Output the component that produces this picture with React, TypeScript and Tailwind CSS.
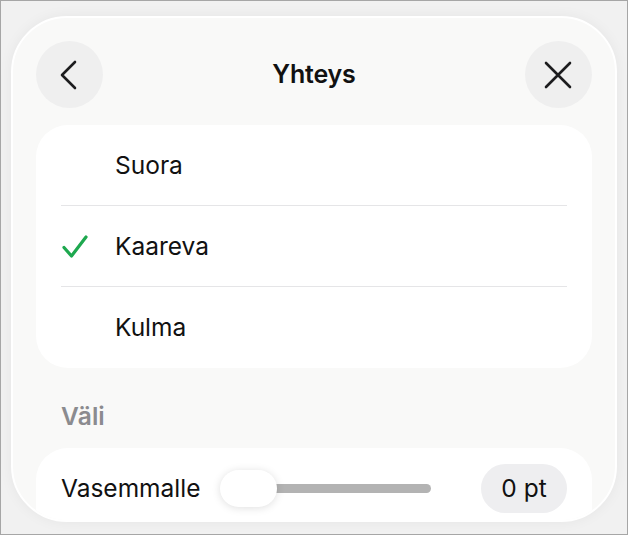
const options = [
  { label: 'Suora', checked: false },
  { label: 'Kaareva', checked: true },
  { label: 'Kulma', checked: false },
];

const App = () => {
  return (
    <div className="h-[535px] w-[628px] overflow-hidden border border-[#a6a6a6] bg-[#f1f1f1] font-['Inter',sans-serif] text-[#111]">
      <div className="ml-[10px] mt-[15px] h-[506px] w-[606px] overflow-hidden rounded-[56px] border-2 border-white bg-[#f9f9f8] px-[23px] shadow-[0_0_14px_rgba(0,0,0,0.05)]">
        {/* header */}
        <div className="mt-[23px] flex items-center justify-between">
          <button className="flex h-[67px] w-[67px] items-center justify-center rounded-full bg-[#efefef]">
            <svg width="20" height="30" viewBox="0 0 20 30" fill="none" className="-ml-[1px]">
              <path d="M16 2 L3 15 L16 28" stroke="#1c1c1e" strokeWidth="2.6" strokeLinecap="round" strokeLinejoin="round" />
            </svg>
          </button>
          <h1 className="text-[25px] font-semibold tracking-[-0.2px]">Yhteys</h1>
          <button className="flex h-[67px] w-[67px] items-center justify-center rounded-full bg-[#efefef]">
            <svg width="30" height="30" viewBox="0 0 30 30" fill="none">
              <path d="M3 3 L27 27 M27 3 L3 27" stroke="#1c1c1e" strokeWidth="2.6" strokeLinecap="round" />
            </svg>
          </button>
        </div>

        {/* options */}
        <div className="mt-[17px] rounded-[32px] bg-white px-[25px]">
          {options.map((opt, key) => (
            <div
              key={key}
              className={`flex h-[81px] items-center ${key === options.length - 1 ? '' : 'border-b border-[#e5e5e7]'}`}
            >
              <div className="flex w-[54px] items-center">
                {opt.checked && (
                  <svg width="26" height="24" viewBox="0 0 26 24" fill="none" className="ml-[1px] mt-[1px]">
                    <path d="M2 12.5 L9.5 21 L24 2" stroke="#1ea84f" strokeWidth="3.2" strokeLinecap="round" strokeLinejoin="round" />
                  </svg>
                )}
              </div>
              <span className="text-[24.5px]">{opt.label}</span>
            </div>
          ))}
        </div>

        {/* spacing */}
        <h2 className="mt-[30px] px-[25px] text-[24.5px] font-semibold text-[#8b8b8f]">Väli</h2>
        <div className="mt-[13px] h-[100px] rounded-[32px] bg-white px-[25px] pt-[16px]">
          <div className="flex items-center">
            <span className="text-[24.5px]">Vasemmalle</span>
            <div className="ml-[20px] flex w-[211px] items-center">
              <div className="relative h-[37px] w-full">
                <div className="absolute left-[20px] right-0 top-[14px] h-[9px] rounded-full bg-[#b3b3b3]" />
                <div className="absolute left-0 top-0 h-[37px] w-[57px] rounded-full bg-white shadow-[0_1px_8px_rgba(0,0,0,0.13)]" />
              </div>
            </div>
            <div className="ml-auto flex h-[49px] w-[86px] items-center justify-center rounded-full bg-[#eeeef0] text-[24.5px]">
              0 pt
            </div>
          </div>
        </div>
      </div>
    </div>
  );
};

export default App;
